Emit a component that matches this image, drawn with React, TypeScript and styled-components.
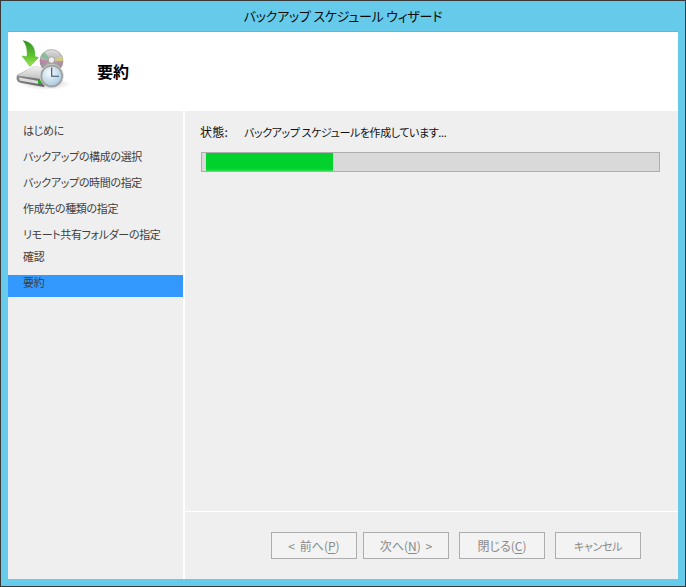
import React from "react";
import styled, { createGlobalStyle } from "styled-components";

const Global = createGlobalStyle`
  html, body { margin: 0; padding: 0; background: #66cbea; }
  body { font-family: "Noto Sans CJK JP", "Noto Sans", sans-serif; font-feature-settings: "palt"; }
  * { box-sizing: border-box; }
`;

const Win = styled.div`
  width: 686px; height: 587px; display: flex; flex-direction: column;
  background: #66cbea; border: 1px solid #3a3a3a;
  padding: 0 7px 7px 7px;
`;
const TitleBar = styled.div`
  height: 30px; display: flex; align-items: center; justify-content: center;
  font-size: 13px; letter-spacing: -0.25px; color: #0a0a0a; padding-bottom: 2px;
`;
const Header = styled.div`
  height: 80px; background: #fff; display: flex; align-items: center;
  border-top: 1px solid #5fb7d4;
`;
const HeaderIcon = styled.svg`
  width: 60px; height: 60px; margin-left: 6px; margin-top: -10px; flex: none;
`;
const HeaderTitle = styled.div`
  margin-left: 23px; margin-top: -2px; font-size: 16px; font-weight: 700; color: #000;
`;
const Body = styled.div`
  flex: 1; display: flex; min-height: 0; background: #fff;
`;
const Sidebar = styled.div`
  width: 175px; background: #efefef; display: flex; flex-direction: column;
  padding-top: 12px; font-size: 11px; letter-spacing: -0.35px;
`;
const Step = styled.div<{ $tight?: boolean; $active?: boolean }>`
  height: 22px; line-height: 14px; padding-left: 15px; flex: none;
  margin-bottom: ${(p) => (p.$tight ? 0 : 4)}px;
  color: #404040;
  background: ${(p) => (p.$active ? "#3399ff" : "transparent")};
`;
const Main = styled.div`
  flex: 1; margin-left: 2px; background: #efefef; display: flex; flex-direction: column;
`;
const Content = styled.div`
  flex: 1; padding: 12px 18px 0 16px;
`;
const StatusRow = styled.div`
  display: flex; font-size: 11px; letter-spacing: -0.4px; line-height: 18px; color: #111;
  margin-left: -1px;
`;
const StatusLabel = styled.span`
  width: 44px; flex: none; font-size: 12px; letter-spacing: 0.3px;
`;
const Track = styled.div`
  margin-top: 11px; height: 20px; background: #d9d9d9; border: 1px solid #adadad;
  padding-left: 4px;
`;
const Fill = styled.div`
  height: 100%; background: linear-gradient(#00d12c 85%, #2bdb4d);
`;
const Footer = styled.div`
  height: 68px; flex: none; border-top: 1px solid #fff; display: flex;
  padding: 20px 37px 0 86px; align-items: flex-start;
`;
const Btn = styled.button<{ $gap: number; $narrow?: boolean }>`
  width: 86px; height: 27px; margin-left: ${(p) => p.$gap}px; padding: 0; flex: none;
  background: #f3f3f3; border: 1px solid #adadad; color: #8a8a8a;
  font-family: "Noto Sans CJK JP", sans-serif; font-feature-settings: "palt";
  font-size: ${(p) => (p.$narrow ? 11 : 12)}px;
  letter-spacing: ${(p) => (p.$narrow ? "-0.35px" : "0")};
  word-spacing: 2px;
  u { text-underline-offset: 2px; }
`;

const DriveIcon = () => (
  <HeaderIcon viewBox="14 36 60 60" aria-hidden>
    <defs>
      <linearGradient id="gArrow" x1="0" y1="0" x2="0" y2="1">
        <stop offset="0" stopColor="#2f8f24" />
        <stop offset="0.55" stopColor="#5cc22f" />
        <stop offset="1" stopColor="#9be650" />
      </linearGradient>
      <linearGradient id="gDisc" x1="0" y1="0" x2="0" y2="1">
        <stop offset="0" stopColor="#e2e2e2" />
        <stop offset="0.5" stopColor="#aeaeae" />
        <stop offset="1" stopColor="#7d7d7d" />
      </linearGradient>
      <linearGradient id="gDriveTop" x1="0" y1="0" x2="0" y2="1">
        <stop offset="0" stopColor="#f4f4f4" />
        <stop offset="1" stopColor="#c0c0c0" />
      </linearGradient>
      <linearGradient id="gDriveFront" x1="0" y1="0" x2="1" y2="1">
        <stop offset="0" stopColor="#9c9c9c" />
        <stop offset="1" stopColor="#5c5c5c" />
      </linearGradient>
      <radialGradient id="gFace" cx="0.4" cy="0.35" r="0.75">
        <stop offset="0" stopColor="#f5fafd" />
        <stop offset="1" stopColor="#9fc3da" />
      </radialGradient>
      <radialGradient id="gShadow" cx="0.5" cy="0.5" r="0.5">
        <stop offset="0" stopColor="#000" stopOpacity="0.2" />
        <stop offset="1" stopColor="#000" stopOpacity="0" />
      </radialGradient>
    </defs>
    <ellipse cx="46" cy="83" rx="26" ry="6" fill="url(#gShadow)" />
    <circle cx="51.5" cy="60" r="11.5" fill="url(#gDisc)" stroke="#8c8c8c" strokeWidth="0.6" />
    <path d="M51.5 60 L41 56 A11.5 11.5 0 0 1 44.5 51 Z" fill="#58b878" opacity="0.55" />
    <path d="M51.5 60 L40.5 64 A11.5 11.5 0 0 1 40 58 Z" fill="#c85aa0" opacity="0.4" />
    <path d="M51.5 60 L62 55 A11.5 11.5 0 0 1 63 60 Z" fill="#e6dc60" opacity="0.6" />
    <path d="M51.5 60 L62 65 A11.5 11.5 0 0 0 63 60 Z" fill="#d070b0" opacity="0.4" />
    <circle cx="51.5" cy="59" r="3.2" fill="#efefef" stroke="#8c8c8c" strokeWidth="0.7" />
    <path d="M17 74 L35 65 L50 69 L44 86 L21 82 Q16.5 81 16.5 77 Z" fill="url(#gDriveFront)" />
    <path d="M17 74.5 L35 65 L50 69 L41 78 Z" fill="url(#gDriveTop)" />
    <path d="M19 76.5 L39 80 L39 83 L19.5 79.5 Z" fill="#dcdcdc" />
    <rect x="38" y="78" width="3" height="5" fill="#2fa82a" />
    <path d="M23 39.5 C32 41 35.5 47 35 55.5 L38.5 56.5 L30 65.5 L22 55 L27 55.5 C27.5 49 26.5 44 23 39.5 Z" fill="url(#gArrow)" stroke="#4aa332" strokeWidth="0.4" />
    <circle cx="51.7" cy="75" r="10.6" fill="url(#gFace)" stroke="#a0a0a0" strokeWidth="2" />
    <circle cx="51.7" cy="75" r="11.8" fill="none" stroke="#dcdcdc" strokeWidth="0.7" />
    <path d="M51.7 66.5 V75.3 H59" fill="none" stroke="#34506c" strokeWidth="1.1" />
  </HeaderIcon>
);

const steps = [
  { label: "はじめに" },
  { label: "バックアップの構成の選択" },
  { label: "バックアップの時間の指定" },
  { label: "作成先の種類の指定" },
  { label: "リモート共有フォルダーの指定", tight: true },
  { label: "確認" },
  { label: "要約", active: true },
];

export default function App() {
  return (
    <Win>
      <Global />
      <TitleBar>バックアップ スケジュール ウィザード</TitleBar>
      <Header>
        <DriveIcon />
        <HeaderTitle>要約</HeaderTitle>
      </Header>
      <Body>
        <Sidebar>
          {steps.map((s) => (
            <Step key={s.label} $tight={s.tight} $active={s.active}>{s.label}</Step>
          ))}
        </Sidebar>
        <Main>
          <Content>
            <StatusRow>
              <StatusLabel>状態:</StatusLabel>
              <span>バックアップ スケジュールを作成しています...</span>
            </StatusRow>
            <Track>
              <Fill style={{ width: `${(127 / 453) * 100}%` }} />
            </Track>
          </Content>
          <Footer>
            <Btn $gap={0} disabled>&lt; 前へ(<u>P</u>)</Btn>
            <Btn $gap={6} disabled>次へ(<u>N</u>) &gt;</Btn>
            <Btn $gap={10} disabled>閉じる(<u>C</u>)</Btn>
            <Btn $gap={10} $narrow disabled>キャンセル</Btn>
          </Footer>
        </Main>
      </Body>
    </Win>
  );
}
